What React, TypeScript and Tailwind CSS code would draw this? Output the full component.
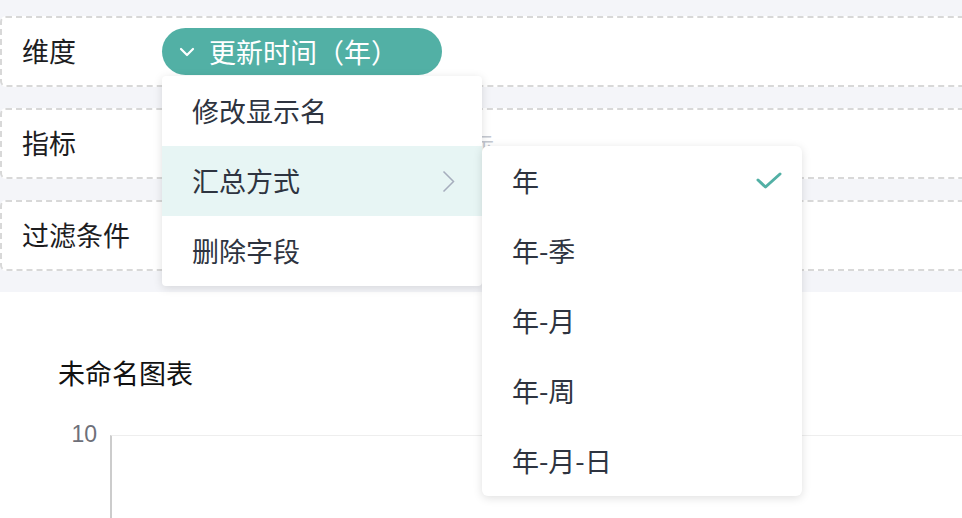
import React from "react";

const Check = () => (
  <svg width="26" height="18" viewBox="0 0 26 18" fill="none">
    <polyline points="2,8 9.5,15 24,2" stroke="#52b0a5" strokeWidth="3" strokeLinecap="round" strokeLinejoin="round" />
  </svg>
);

export default function App() {
  const sub = ["年", "年-季", "年-月", "年-周", "年-月-日"];
  return (
    <div className="relative w-[962px] h-[518px] overflow-hidden bg-white font-['Noto_Sans_CJK_SC','Noto_Sans',sans-serif]">
      <div className="w-[1000px] bg-[#f4f5f9] pt-[16px] pb-[21px] flex flex-col gap-[21px]">
        <div className="h-[71px] bg-white border-2 border-dashed border-[#d8d8d8] rounded-[6px] flex items-center pl-[20px]">
          <span className="w-[140px] text-[27px] text-[#1d1d1f]">维度</span>
          <div className="w-[280px] h-[47px] rounded-full bg-[#52b0a5] flex items-center pl-[17px] text-white">
            <svg width="16" height="10" viewBox="0 0 16 10" fill="none">
              <polyline points="2,2 8,8 14,2" stroke="white" strokeWidth="2.2" strokeLinecap="round" strokeLinejoin="round" />
            </svg>
            <span className="ml-[14px] text-[27px] leading-none">更新时间（年）</span>
          </div>
        </div>
        <div className="h-[71px] bg-white border-2 border-dashed border-[#d8d8d8] rounded-[6px] flex items-center pl-[20px]">
          <span className="w-[152px] text-[27px] text-[#1d1d1f]">指标</span>
          <span className="text-[20px] text-[#c4c8d0]">从左侧拖入字段到此处用于指标展示</span>
        </div>
        <div className="h-[71px] bg-white border-2 border-dashed border-[#d8d8d8] rounded-[6px] flex items-center pl-[20px]">
          <span className="w-[140px] text-[27px] text-[#1d1d1f]">过滤条件</span>
        </div>
      </div>

      <div className="pt-[63px] pl-[58px] text-[27px] leading-[36px] text-[#111]">未命名图表</div>
      <div className="flex mt-[44px]">
        <div className="w-[110px] pr-[13px] text-right font-['Liberation_Sans',sans-serif] text-[23px] leading-[24px] text-[#6e7079] -mt-[13px]">
          10
        </div>
        <div className="flex-1 h-[120px] border-l-2 border-[#cccccc] border-t border-t-[#eeeeee]"></div>
      </div>

      <div className="absolute left-[162px] top-[76px] w-[320px] bg-white rounded-[4px] shadow-[0_2px_10px_rgba(0,0,0,0.13)] flex flex-col">
        <div className="h-[70px] flex items-center pl-[30px] text-[27px] text-[#2e3440]">修改显示名</div>
        <div className="h-[70px] flex items-center justify-between pl-[30px] pr-[27px] text-[27px] text-[#2e3440] bg-[#e7f5f4]">
          <span>汇总方式</span>
          <svg width="13" height="23" viewBox="0 0 13 23" fill="none">
            <polyline points="1.5,1.5 11.5,11.5 1.5,21.5" stroke="#a6adbd" strokeWidth="1.5" />
          </svg>
        </div>
        <div className="h-[70px] flex items-center pl-[30px] text-[27px] text-[#2e3440]">删除字段</div>
      </div>

      <div className="absolute left-[482px] top-[146px] w-[320px] bg-white rounded-[6px] shadow-[0_2px_10px_rgba(0,0,0,0.13)] flex flex-col">
        {sub.map((s, i) => (
          <div key={s} className="h-[70px] flex items-center justify-between pl-[30px] pr-[20px] text-[27px] text-[#2e3440]">
            <span>{s}</span>
            {i === 0 ? <Check /> : null}
          </div>
        ))}
      </div>
    </div>
  );
}
